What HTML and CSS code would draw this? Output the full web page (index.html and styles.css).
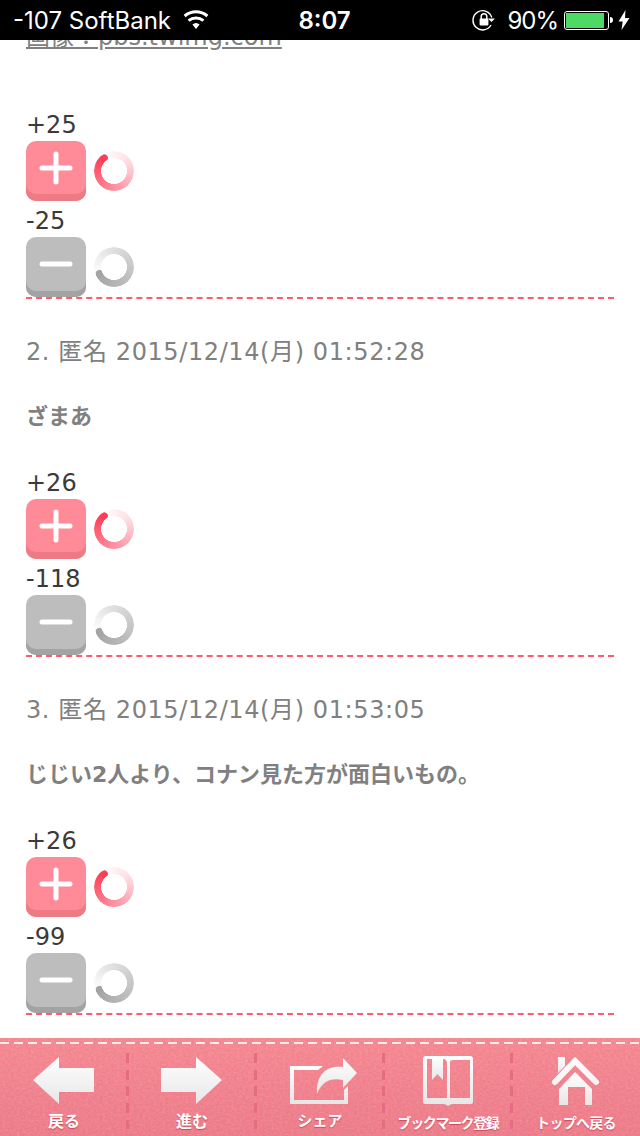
FILE: index.html
```html
<!DOCTYPE html>
<html lang="ja">
<head>
<meta charset="utf-8">
<title>コメント</title>
<link rel="stylesheet" href="styles.css">
</head>
<body>
<header class="status">
  <div class="status-left">
    <span>-107 SoftBank</span>
    <svg class="wifi" viewBox="0 0 26 20" width="26" height="20"><path d="M13 19l-3.6-4.4a5.6 5.6 0 0 1 7.2 0z" fill="#fff"/><path d="M5.6 10.6a11.6 11.6 0 0 1 14.8 0M1.6 6a17.6 17.6 0 0 1 22.8 0" fill="none" stroke="#fff" stroke-width="3"/></svg>
  </div>
  <div class="status-time">8:07</div>
  <div class="status-right">
    <svg class="lock" viewBox="0 0 24 24" width="24" height="24"><path d="M19.8 9.5A9.6 9.6 0 1 0 19 17" fill="none" stroke="#fff" stroke-width="1.4"/><path d="M16 10.5h7l-3.5 3.5z" fill="#fff"/><path d="M9.2 11V8.6a2.8 2.8 0 0 1 5.6 0V11" fill="none" stroke="#fff" stroke-width="1.5"/><rect x="7.6" y="10.6" width="8.8" height="7" rx="1" fill="#fff"/></svg>
    <span class="pct">90%</span>
    <div class="battery"><div class="battery-fill"></div></div>
    <div class="battery-tip"></div>
    <svg class="bolt" viewBox="0 0 12 20" width="12" height="20"><path d="M7.5 0L0.5 11.5h4.2L3.5 20l8-12H7z" fill="#fff"/></svg>
  </div>
</header>

<main class="content">
  <div class="cut-line"><a class="source">画像：pbs.twimg.com</a></div>

  <section class="comment comment-first">
    <div class="count">+25</div>
    <div class="vote"><div class="btn btn-plus"><svg viewBox="0 0 60 54" width="60" height="54"><path d="M16 27h28M30 13v28" stroke="#fff" stroke-width="5" stroke-linecap="round"/></svg></div><div class="ring ring-plus"><i class="head"></i></div></div>
    <div class="count">-25</div>
    <div class="vote"><div class="btn btn-minus"><svg viewBox="0 0 60 54" width="60" height="54"><path d="M16 27h28" stroke="#fff" stroke-width="5" stroke-linecap="round"/></svg></div><div class="ring ring-minus"><i class="head"></i></div></div>
  </section>

  <section class="comment">
    <h2 class="meta">2. 匿名 2015/12/14(月) 01:52:28</h2>
    <p class="body">ざまあ</p>
    <div class="count">+26</div>
    <div class="vote"><div class="btn btn-plus"><svg viewBox="0 0 60 54" width="60" height="54"><path d="M16 27h28M30 13v28" stroke="#fff" stroke-width="5" stroke-linecap="round"/></svg></div><div class="ring ring-plus"><i class="head"></i></div></div>
    <div class="count">-118</div>
    <div class="vote"><div class="btn btn-minus"><svg viewBox="0 0 60 54" width="60" height="54"><path d="M16 27h28" stroke="#fff" stroke-width="5" stroke-linecap="round"/></svg></div><div class="ring ring-minus"><i class="head"></i></div></div>
  </section>

  <section class="comment">
    <h2 class="meta">3. 匿名 2015/12/14(月) 01:53:05</h2>
    <p class="body">じじい2人より、コナン見た方が面白いもの。</p>
    <div class="count">+26</div>
    <div class="vote"><div class="btn btn-plus"><svg viewBox="0 0 60 54" width="60" height="54"><path d="M16 27h28M30 13v28" stroke="#fff" stroke-width="5" stroke-linecap="round"/></svg></div><div class="ring ring-plus"><i class="head"></i></div></div>
    <div class="count">-99</div>
    <div class="vote"><div class="btn btn-minus"><svg viewBox="0 0 60 54" width="60" height="54"><path d="M16 27h28" stroke="#fff" stroke-width="5" stroke-linecap="round"/></svg></div><div class="ring ring-minus"><i class="head"></i></div></div>
  </section>
</main>

<nav class="toolbar">
  <svg class="grain" width="640" height="98"><defs>
    <filter id="noise" x="0" y="0" width="100%" height="100%"><feTurbulence type="fractalNoise" baseFrequency="0.35 0.5" numOctaves="3" seed="4"/><feColorMatrix type="matrix" values="0 0 0 0 1  0 0 0 0 1  0 0 0 0 1  1.4 0 0 0 -0.45"/></filter>
    <linearGradient id="iconfill" x1="0" y1="0" x2="0" y2="1"><stop offset="0" stop-color="#ffffff"/><stop offset="1" stop-color="#e6e6e6"/></linearGradient>
  </defs><rect width="640" height="98" filter="url(#noise)" opacity=".18"/></svg>
  <div class="tool">
    <svg class="tool-icon" viewBox="0 0 128 60" width="128" height="60"><path d="M33 30L59 7V18H94V42H59V54z" fill="url(#iconfill)"/></svg>
    <span class="tool-label">戻る</span>
  </div>
  <div class="tool">
    <svg class="tool-icon" viewBox="0 0 128 60" width="128" height="60"><path d="M94 30L68 7V18H33V42H68V54z" fill="url(#iconfill)"/></svg>
    <span class="tool-label">進む</span>
  </div>
  <div class="tool">
    <svg class="tool-icon" viewBox="0 0 128 60" width="128" height="60"><path fill="url(#iconfill)" d="M34 16H67L62 20H38V50H88V40L92 36V54H34z"/><path fill="url(#iconfill)" d="M61 44C60 25 70 15 87 17V8L101 23L87 38V30C75 28 67 30 61 44z"/></svg>
    <span class="tool-label label-share">シェア</span>
  </div>
  <div class="tool">
    <svg class="tool-icon" viewBox="0 0 128 60" width="128" height="60"><path fill="url(#iconfill)" fill-rule="evenodd" d="M42 6H86Q89 6 89 9V52Q89 54 87 54H69Q66 54 64 56Q62 54 59 54H42Q39 54 39 52V9Q39 6 42 6zM43 9V48H63V12Q62 9 60 9zM66 12V48H86V10H69Q66 10 66 12z"/><path fill="url(#iconfill)" d="M48 7H59V30L53.500 24L48 30z"/></svg>
    <span class="tool-label label-wide">ブックマーク登録</span>
  </div>
  <div class="tool">
    <svg class="tool-icon" viewBox="0 0 128 60" width="128" height="60"><path fill="none" stroke="url(#roof)" stroke-width="6" stroke-linecap="round" d="M43 32L63 11L84 32"/><path fill="url(#iconfill)" d="M46 7H53V16L46 23z"/><path fill="url(#iconfill)" d="M63 22L80 39V55H73V37H56V55H47V39z"/><defs><linearGradient id="roof" gradientUnits="userSpaceOnUse" x1="0" y1="8" x2="0" y2="36"><stop offset="0" stop-color="#fff"/><stop offset="1" stop-color="#f2f2f2"/></linearGradient></defs></svg>
    <span class="tool-label label-top">トップへ戻る</span>
  </div>
</nav>
</body>
</html>
```

FILE: styles.css
```css
* { box-sizing: border-box; }
html, body { margin: 0; padding: 0; }
body {
  width: 640px;
  height: 1136px;
  overflow: hidden;
  display: flex;
  flex-direction: column;
  background: #fff;
  font-family: "DejaVu Sans", "Noto Sans CJK JP", sans-serif;
}

.status {
  position: relative;
  z-index: 2;
  flex: 0 0 40px;
  height: 40px;
  background: #000;
  color: #fff;
  display: grid;
  grid-template-columns: 1fr auto 1fr;
  align-items: center;
  font-family: Inter, "Liberation Sans", sans-serif;
  font-size: 24px;
  padding: 0 10px 0 13px;
}
.status-left { display: flex; align-items: center; gap: 12px; }
.status-time { font-weight: 600; padding-left: 6px; }
.status-right { display: flex; align-items: center; justify-content: flex-end; }
.wifi { display: block; }
.lock { display: block; margin-right: 11px; }
.pct { margin-right: 6px; letter-spacing: -1px; }
.battery {
  width: 45px;
  height: 19px;
  border: 1px solid #fff;
  border-radius: 3px;
  padding: 1px;
}
.battery-fill { width: 38px; height: 15px; background: #4cd964; }
.battery-tip { width: 3px; height: 6px; background: #fff; border-radius: 0 3px 3px 0; margin-left: 1px; margin-right: 5px; }
.bolt { display: block; }

.content { flex: 1; min-height: 0; overflow: hidden; padding: 0 26px; color: #3a3a3a; }
.cut-line { margin-top: -18px; height: 37px; font-size: 24px; line-height: 30px; color: #808080; }
.source { text-decoration: underline; }

.comment { border-bottom: 2px dashed #ff5a6e; height: 358px; padding-top: 35px; }
.comment-first { height: 240px; padding-top: 48px; }

.meta { margin: 0; font-size: 24px; font-weight: 400; color: #808080; line-height: 36px; height: 36px; letter-spacing: .6px; white-space: nowrap; }
.body { margin: 32px 0 0; font-size: 22px; font-weight: 700; color: #808080; line-height: 30px; height: 63px; white-space: nowrap; }

.count { font-size: 24px; line-height: 34px; height: 34px; padding-top: 1px; color: #3a3a3a; }
.vote { display: flex; align-items: flex-start; height: 62px; }
.vote:last-child { height: 60px; }
.btn {
  width: 60px;
  height: 60px;
  border-radius: 10px;
}
.btn svg { display: block; }
.btn-plus { background: #ff8b98; box-shadow: inset 0 -7px 0 #ee7a86; }
.btn-minus { background: #bdbdbd; box-shadow: inset 0 -6px 0 #a3a3a3; }

.ring {
  position: relative;
  width: 40px;
  height: 40px;
  margin: 10px 0 0 8px;
  border-radius: 50%;
  -webkit-mask: radial-gradient(circle closest-side, transparent 0 12.7px, #000 13.2px);
  mask: radial-gradient(circle closest-side, transparent 0 12.7px, #000 13.2px);
}
.head {
  position: absolute;
  left: 16.500px;
  top: 0;
  width: 7px;
  height: 7px;
  border-radius: 50%;
  transform-origin: 3.5px 20px;
}
.ring-plus { background: conic-gradient(from 322deg, #fff 0deg, #ffdfe4 90deg, #ffa0ae 190deg, #ff3b55 360deg); }
.ring-plus .head { background: #ff3b55; transform: rotate(322deg); }
.ring-minus { background: conic-gradient(from 247deg, #fff 0deg, #e4e4e4 90deg, #c8c8c8 200deg, #a4a4a4 360deg); }
.ring-minus .head { background: #a4a4a4; transform: rotate(247deg); }

.toolbar {
  flex: 0 0 98px;
  height: 98px;
  display: flex;
  background: linear-gradient(#f4858f, #ec7886);
  position: relative;
  padding-top: 5px;
}
.toolbar::before {
  content: "";
  position: absolute;
  left: 0;
  right: 0;
  top: 4px;
  height: 2px;
  background: repeating-linear-gradient(90deg, rgba(255,255,255,.85) 0 9px, transparent 9px 14px);
}
.grain { position: absolute; left: 0; top: 0; display: block; }
.tool {
  flex: 0 0 128px;
  width: 128px;
  height: 93px;
  display: flex;
  flex-direction: column;
  align-items: center;
  position: relative;
  padding-top: 7px;
}
.tool:not(:last-child)::after {
  content: "";
  position: absolute;
  right: -1px;
  top: 10px;
  width: 3px;
  height: 76px;
  background: repeating-linear-gradient(180deg, #e66c84 0 10px, transparent 10px 16.67px);
}
.tool-icon { display: block; position: relative; }
.tool-label {
  position: relative;
  margin-top: 1px;
  font-family: "Noto Sans CJK JP", sans-serif;
  font-size: 16px;
  line-height: 18px;
  font-weight: 700;
  color: #fff;
  white-space: nowrap;
  text-shadow: 0 1px 1px rgba(170,40,60,.6);
}
.label-share { font-size: 15px; }
.label-wide { font-size: 14px; letter-spacing: -1.4px; margin-top: 3px; }
.label-top { font-size: 14px; letter-spacing: -.7px; margin-top: 3px; }
```
